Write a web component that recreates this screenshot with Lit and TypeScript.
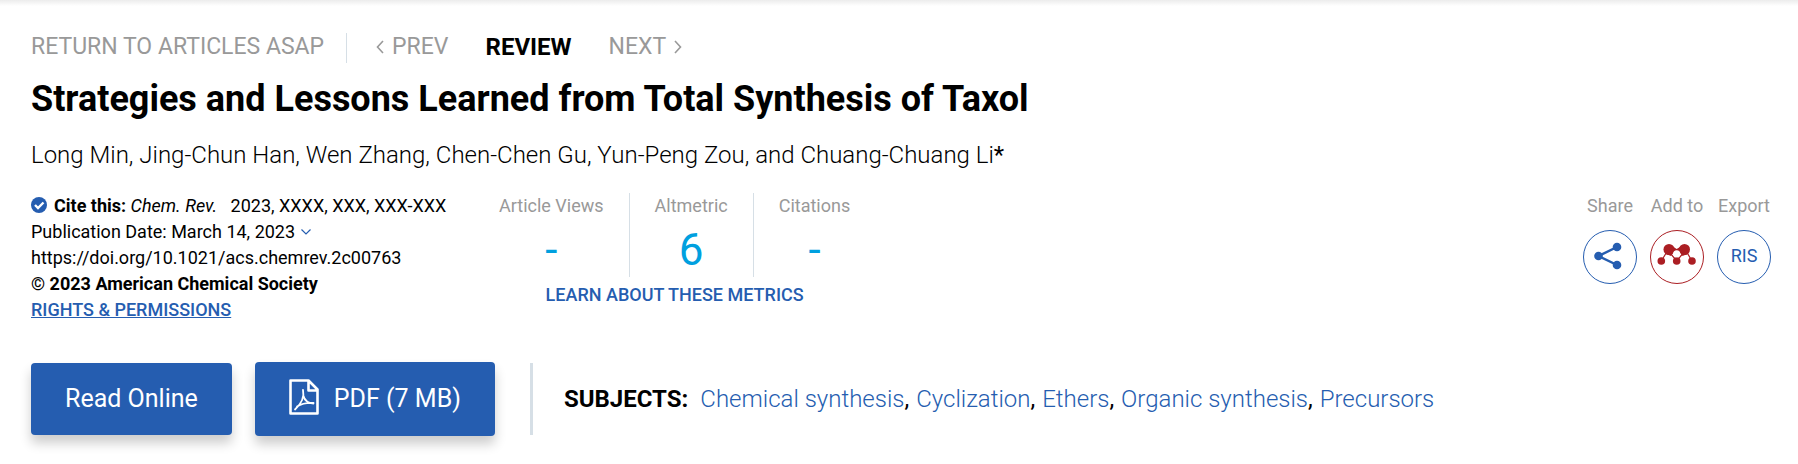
import { LitElement, html, css, svg } from "lit";
import { customElement } from "lit/decorators.js";

const subjects = ["Chemical synthesis", "Cyclization", "Ethers", "Organic synthesis", "Precursors"];
const authors = ["Long Min", "Jing-Chun Han", "Wen Zhang", "Chen-Chen Gu", "Yun-Peng Zou"];
const metrics = [
  { label: "Article Views", value: "-" },
  { label: "Altmetric", value: "6" },
  { label: "Citations", value: "-" },
];

const chevron = (d: string) => html`<svg class="chev" viewBox="0 0 8 14" aria-hidden="true">
  ${svg`<path d=${d} fill="none" stroke="currentColor" stroke-width="1.600"/>`}
</svg>`;

@customElement("app-root")
export class AppRoot extends LitElement {
  static styles = css`
    :host {
      display: block;
      font-family: Roboto, "Liberation Sans", sans-serif;
      font-size: 18px;
      line-height: 26px;
      color: #000;
      background: #fff;
    }
    a { color: inherit; text-decoration: none; }
    button { font: inherit; cursor: pointer; }
    .page {
      padding: 33px 27px 28px 31px;
      background: linear-gradient(#ececec, #fff) top / 100% 6px no-repeat;
    }
    .nav {
      display: flex;
      align-items: center;
      font-size: 23px;
      line-height: 28px;
      color: #999;
    }
    .return { padding: 0 22px 2px 0; border-right: 1px solid #d6dfe6; }
    .nav-list { display: flex; gap: 37px; padding: 0 0 2px 29px; }
    .nav-list a, .current { display: flex; align-items: center; gap: 8px; }
    .current { color: #000; font-size: 24px; font-weight: 700; }
    .chev { width: 8px; height: 14px; }
    h1 { margin: 14px 0 0; font-size: 36px; line-height: 44px; font-weight: 700; }
    .authors { margin: 18px 0 0; font-size: 24px; line-height: 32px; font-weight: 300; }
    .authors b { font-weight: 400; }
    .details { display: flex; align-items: flex-start; margin-top: 22px; }
    .cite { width: 468px; }
    .cite-line { display: flex; align-items: center; white-space: pre; }
    .check { width: 16px; height: 16px; margin: 0 7px 3px 0; }
    .down { width: 10px; height: 6px; margin-left: 6px; color: #255db0; }
    .strong { font-weight: 700; }
    .rights { color: #255db0; text-decoration: underline; display: inline-block; font-weight: 500; }
    .metrics { display: grid; justify-items: center; }
    .metric-row { display: flex; }
    .metric { padding: 0 25px; text-align: center; height: 84px; border-right: 1px solid #d6dfe6; color: #999; }
    .metric:first-child { padding-left: 0; }
    .metric:last-child { padding-right: 0; border: 0; }
    .value { font-size: 44px; line-height: 62px; color: #00a0df; }
    .learn { color: #255db0; font-weight: 500; margin-top: 5px; }
    .tools { display: flex; gap: 13px; margin-left: auto; color: #999; text-align: center; }
    .tool { display: flex; flex-direction: column; align-items: center; gap: 11px; width: 54px; white-space: nowrap; }
    .round {
      display: grid; place-items: center; width: 54px; height: 54px; padding: 0 0 2px;
      border: 1px solid #255db0; border-radius: 50%; background: #fff; color: #255db0;
    }
    .round.red { border-color: #ab1e23; color: #ab1e23; }
    .share { width: 32px; height: 32px; }
    .mend { width: 40px; height: 30px; }
    .actions { display: flex; align-items: center; margin-top: 39px; }
    .btn {
      display: flex; align-items: center; justify-content: center; gap: 15px;
      padding: 0 34px; height: 72px; font-size: 25px; color: #fff; background: #255db0; border: 0;
      border-radius: 4px; box-shadow: 0 8px 12px rgba(0, 0, 0, .2); margin-right: 23px;
    }
    .pdf { height: 74px; margin-right: 35px; }
    .pdf svg { width: 30px; height: 36px; margin-bottom: 4px; }
    .subjects { display: flex; align-items: center; height: 72px; border-left: 3px solid #d6dfe6; padding-left: 31px; font-size: 24px; font-weight: 300; }
    .subjects strong { font-weight: 700; margin-right: 12px; }
    .subjects a { color: #255db0; }
    .comma { font-weight: 400; margin-right: 1px; }
  `;

  render() {
    return html`<main class="page">
      <nav class="nav">
        <a class="return" href="#">RETURN TO ARTICLES ASAP</a>
        <div class="nav-list">
          <a href="#">${chevron("M7 1 1.500 7 7 13")}PREV</a>
          <span class="current">REVIEW</span>
          <a href="#">NEXT${chevron("M1 1l5.500 6L1 13")}</a>
        </div>
      </nav>
      <h1>Strategies and Lessons Learned from Total Synthesis of Taxol</h1>
      <p class="authors">${authors.map((a) => html`<a href="#">${a}</a>, `)}and <a href="#">Chuang-Chuang Li</a><b>*</b></p>
      <section class="details">
        <div class="cite">
          <div class="cite-line"><svg class="check" viewBox="0 0 16 16" aria-hidden="true"><circle cx="8" cy="8" r="8" fill="#255db0"/><path d="M4 8l3 3 5.500-5.500" fill="none" stroke="#fff" stroke-width="2.400"/></svg><span class="strong">Cite this: </span><i>Chem. Rev.</i>   2023, XXXX, XXX, XXX-XXX</div>
          <div class="cite-line">Publication Date: March 14, 2023<svg class="down" viewBox="0 0 10 6" aria-hidden="true"><path d="M.5.5 5 5 9.500.5" fill="none" stroke="currentColor" stroke-width="1.200"/></svg></div>
          <a class="cite-line" href="#">https://doi.org/10.1021/acs.chemrev.2c00763</a>
          <div class="strong">© 2023 American Chemical Society</div>
          <a class="rights" href="#">RIGHTS &amp; PERMISSIONS</a>
        </div>
        <div class="metrics">
          <div class="metric-row">
            ${metrics.map((m) => html`<div class="metric">${m.label}<div class="value">${m.value}</div></div>`)}
          </div>
          <a class="learn" href="#">LEARN ABOUT THESE METRICS</a>
        </div>
        <div class="tools">
          <div class="tool"><span id="share">Share</span>
            <button class="round" aria-labelledby="share"><svg class="share" viewBox="0 0 32 32" fill="currentColor"><path d="M23 7 4.500 16 23 25" fill="none" stroke="currentColor" stroke-width="2.500"/><circle cx="4.500" cy="16" r="4.300"/><circle cx="23" cy="7" r="4.300"/><circle cx="23" cy="25" r="4.300"/></svg></button>
          </div>
          <div class="tool"><span id="add">Add to</span>
            <button class="round red" aria-labelledby="add"><svg class="mend" viewBox="0 0 40 30" fill="currentColor"><path d="M11 9 4.300 20M28.500 9 35 20M14 13l5.700 7 5.700-7" fill="none" stroke="currentColor" stroke-width="1.200"/><path d="M12 5h3l4.700 3L24.500 5h3l3 8-5 2-2.500-4-3.300-1-3.300 1-2.400 4-5-2z"/><circle cx="12" cy="8.500" r="5.500"/><circle cx="27.500" cy="8.500" r="5.500"/><circle cx="19.700" cy="20" r="3.800"/><circle cx="4.300" cy="20" r="3.800"/><circle cx="35" cy="20" r="3.800"/><circle cx="19.700" cy="12.700" r="3.500" fill="#fff"/></svg></button>
          </div>
          <div class="tool"><span id="export">Export</span><button class="round" aria-describedby="export">RIS</button></div>
        </div>
      </section>
      <section class="actions">
        <button class="btn">Read Online</button>
        <button class="btn pdf"><svg viewBox="0 0 30 36" fill="none" stroke="#fff" aria-hidden="true"><path d="M1.500 1.500h18l9 9v24h-27zM19.500 1.500v10h9" stroke-width="2.600" stroke-linejoin="round"/><path d="M14 11c2 9-3 15-8 19.500M14.500 17c1 4 4 7 10 7.500M8 27.500c5-3 10-4 16.500-3.500" stroke-width="1.800" stroke-linecap="round"/></svg>PDF (7 MB)</button>
        <div class="subjects"><strong>SUBJECTS:</strong><span>${subjects.map((s, i) => html`${i ? html`<span class="comma">, </span>` : ""}<a href="#">${s}</a>`)}</span></div>
      </section>
    </main>`;
  }
}
